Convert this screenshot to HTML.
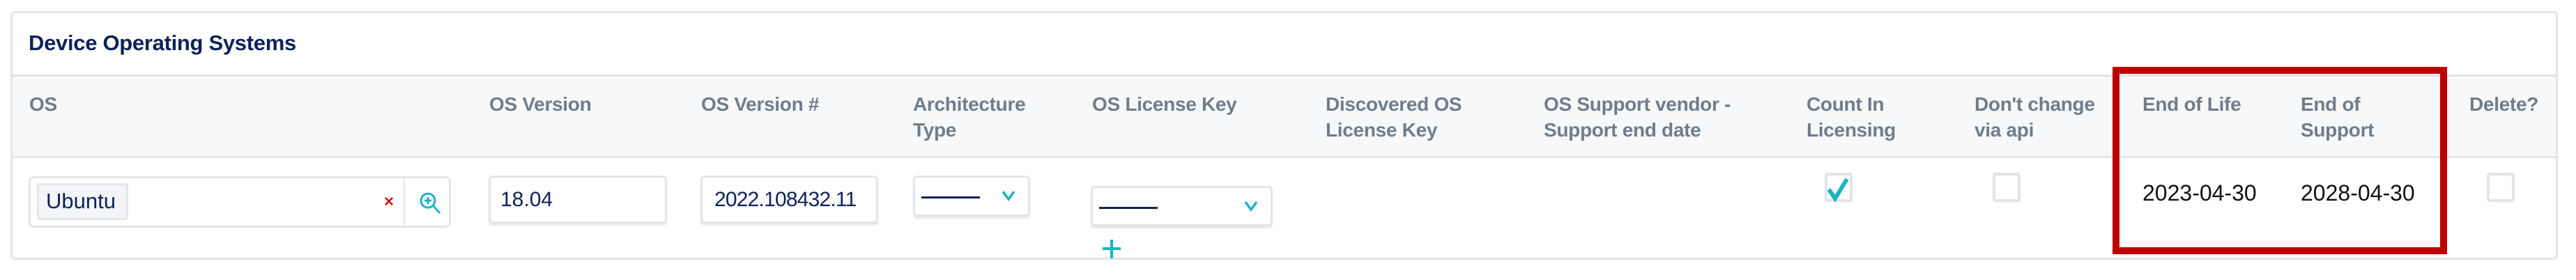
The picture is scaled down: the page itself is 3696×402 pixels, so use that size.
<!DOCTYPE html>
<html><head><meta charset="utf-8"><style>
*{margin:0;padding:0;box-sizing:border-box}
body{width:3696px;height:402px;background:#fff;position:relative;overflow:hidden;font-family:"Liberation Sans",sans-serif}
.a{position:absolute}
.card{left:15px;top:16px;width:3655px;height:357px;border:3px solid #e3e5e9;border-radius:6px}
.hdr{left:18px;top:107px;width:3649px;height:120px;background:#f7f8fa;border-top:3px solid #e3e5e9;border-bottom:3px solid #e3e5e9}
.title{left:41px;top:44px;font-size:31px;font-weight:bold;color:#0d2259;letter-spacing:-0.3px}
.h{font-size:28px;font-weight:bold;color:#6f7d8b;line-height:37px;top:131px;letter-spacing:-0.3px}
.inp{border:3px solid #e3e5e9;border-radius:6px;background:#fff;box-shadow:0 3px 2px #e6e8ec}
.v{font-size:30px;color:#0d2259}
.d{font-size:32px;color:#111;top:259px}
.cb{width:40px;height:42px;border:4px solid #e1e4e8;border-radius:4px;background:#fff}
</style></head><body>
<div class="a card"></div>
<div class="a hdr"></div>
<div class="a title">Device Operating Systems</div>

<div class="a h" style="left:42px">OS</div>
<div class="a h" style="left:702px">OS Version</div>
<div class="a h" style="left:1006px">OS Version #</div>
<div class="a h" style="left:1310px">Architecture<br>Type</div>
<div class="a h" style="left:1567px">OS License Key</div>
<div class="a h" style="left:1902px">Discovered OS<br>License Key</div>
<div class="a h" style="left:2215px">OS Support vendor -<br>Support end date</div>
<div class="a h" style="left:2592px">Count In<br>Licensing</div>
<div class="a h" style="left:2833px">Don't change<br>via api</div>
<div class="a h" style="left:3074px">End of Life</div>
<div class="a h" style="left:3301px">End of<br>Support</div>
<div class="a h" style="left:3543px">Delete?</div>

<div class="a" style="left:41px;top:253px;width:606px;height:74px;border:3px solid #e3e5e9;border-radius:8px;background:#fff"></div>
<div class="a" style="left:579px;top:255px;width:2px;height:70px;background:#e3e5e9"></div>
<div class="a" style="left:53px;top:263px;width:131px;height:53px;background:#f3f5f8;border:3px solid #e3e5e9;border-radius:4px"></div>
<div class="a v" style="left:66px;top:271px;font-size:31px">Ubuntu</div>
<div class="a" style="left:551px;top:276px;font-size:24px;font-weight:bold;color:#cc1111">×</div>
<svg class="a" style="left:600px;top:274px" width="36" height="36" viewBox="0 0 36 36"><circle cx="14" cy="14" r="10" fill="none" stroke="#1ab3c6" stroke-width="3"/><path d="M14 9v10M9 14h10M21 21l10 11" stroke="#1ab3c6" stroke-width="3" fill="none"/></svg>

<div class="a inp" style="left:701px;top:252px;width:256px;height:69px"></div>
<div class="a v" style="left:718px;top:270px">18.04</div>
<div class="a inp" style="left:1005px;top:252px;width:255px;height:69px"></div>
<div class="a v" style="left:1025px;top:270px;letter-spacing:-0.8px">2022.108432.11</div>

<div class="a inp" style="left:1310px;top:252px;width:168px;height:59px"></div>
<div class="a" style="left:1322px;top:282px;width:84px;height:3px;background:#0d2259"></div>
<svg class="a" style="left:1436px;top:272px" width="22" height="18" viewBox="0 0 22 18"><path d="M3 3l8 11 8-11" stroke="#1ab3c6" stroke-width="3.5" fill="none"/></svg>

<div class="a inp" style="left:1565px;top:267px;width:261px;height:58px"></div>
<div class="a" style="left:1577px;top:297px;width:84px;height:3px;background:#0d2259"></div>
<svg class="a" style="left:1784px;top:287px" width="22" height="18" viewBox="0 0 22 18"><path d="M3 3l8 11 8-11" stroke="#1ab3c6" stroke-width="3.5" fill="none"/></svg>
<svg class="a" style="left:1580px;top:343px" width="30" height="28" viewBox="0 0 30 28"><path d="M15 1v27M2 14h26" stroke="#1ab3c6" stroke-width="4"/></svg>

<div class="a cb" style="left:2618px;top:248px"></div>
<svg class="a" style="left:2620px;top:254px" width="38" height="36" viewBox="0 0 38 36"><path d="M4 18l9 13L30 3" stroke="#1ab3c6" stroke-width="6" fill="none"/></svg>
<div class="a cb" style="left:2859px;top:248px"></div>
<div class="a cb" style="left:3568px;top:248px"></div>

<div class="a d" style="left:3074px">2023-04-30</div>
<div class="a d" style="left:3301px">2028-04-30</div>

<div class="a" style="left:3031px;top:96px;width:480px;height:269px;border:10px solid #c00000"></div>
</body></html>
